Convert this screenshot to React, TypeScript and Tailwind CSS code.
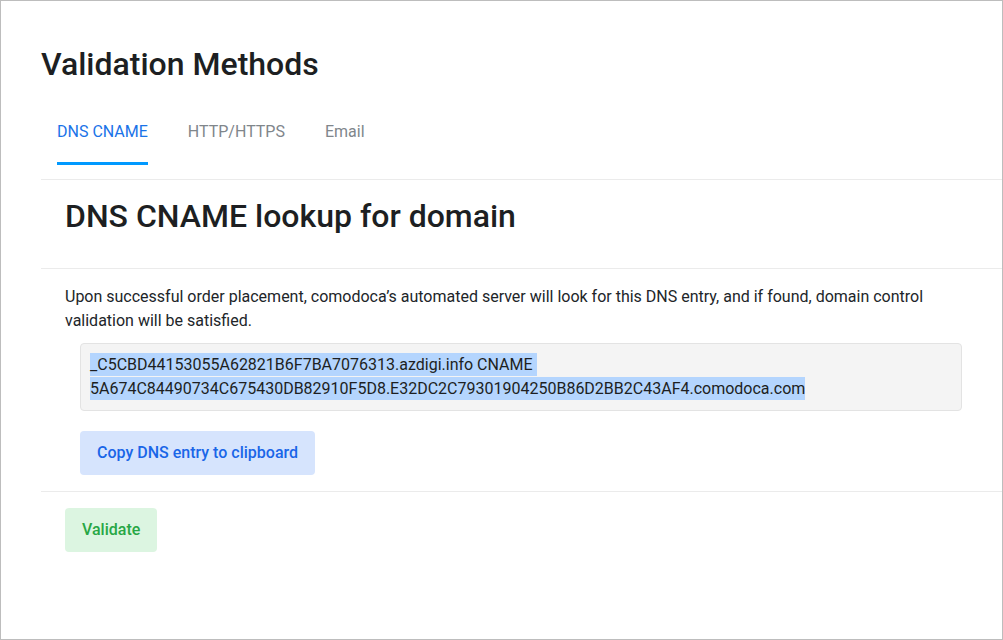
import { useState } from 'react';

const tabs = ['DNS CNAME', 'HTTP/HTTPS', 'Email'];

const dnsEntry = [
  '_C5CBD44153055A62821B6F7BA7076313.azdigi.info CNAME ',
  '5A674C84490734C675430DB82910F5D8.E32DC2C79301904250B86D2BB2C43AF4.comodoca.com',
];

export default function App() {
  const [active, setActive] = useState(0);

  return (
    <div className="h-[640px] w-[1003px] border border-[#bdbdbd] bg-white font-['Roboto','Liberation_Sans',sans-serif] text-[#212529]">
      <div className="pl-10">
        {/* 헤더 */}
        <h1 className="pt-[44px] text-[32px] leading-[38px] font-medium text-[#1d1f22]">Validation Methods</h1>

        {/* 탭 */}
        <div className="mt-[36px] flex gap-10 border-b border-[#ebebeb] pb-[14px] pl-4">
          {tabs.map((t, i) => (
            <button
              key={t}
              onClick={() => setActive(i)}
              className={`pt-[1px] pb-[18px] text-[16px] leading-[24px] border-b-[3px] ${
                i === active ? 'border-[#0099ff] text-[#1a73e8]' : 'border-transparent text-[#80868b]'
              }`}
            >
              {t}
            </button>
          ))}
        </div>

        {/* 섹션 제목 */}
        <div className="border-b border-[#ebebeb] px-6 pt-[17px] pb-[33px]">
          <h2 className="text-[32px] leading-[38px] font-medium text-[#1d1f22]">DNS CNAME lookup for domain</h2>
        </div>

        {/* 본문 */}
        <div className="border-b border-[#ebebeb] px-6 pt-[16px] pb-[16px]">
          <p className="text-[16px] leading-[24px]">
            Upon successful order placement, comodoca’s automated server will look for this DNS entry, and if found, domain control validation will be satisfied.
          </p>
          <div className="mt-[10px] mr-[16px] ml-[15px] rounded border border-[#e3e3e3] bg-[#f4f4f4] pt-[9px] pb-[9px] px-[9px]">
            {dnsEntry.map((line, i) => (
              <div key={i}>
                <span className="inline-block whitespace-pre bg-[#b4d5fe] text-[16px] leading-[23px] text-[#1d1f22]">{line}</span>
              </div>
            ))}
          </div>
          <button className="mt-[20px] ml-[15px] h-[44px] rounded bg-[#d6e4fd] px-[17px] text-[16px] font-medium text-[#1a66e8]">
            Copy DNS entry to clipboard
          </button>
        </div>

        {/* 검증 */}
        <div className="px-6 pt-[16px]">
          <button className="h-[44px] rounded bg-[#dcf5e1] px-[17px] text-[16px] font-medium text-[#28a745]">
            Validate
          </button>
        </div>
      </div>
    </div>
  );
}
